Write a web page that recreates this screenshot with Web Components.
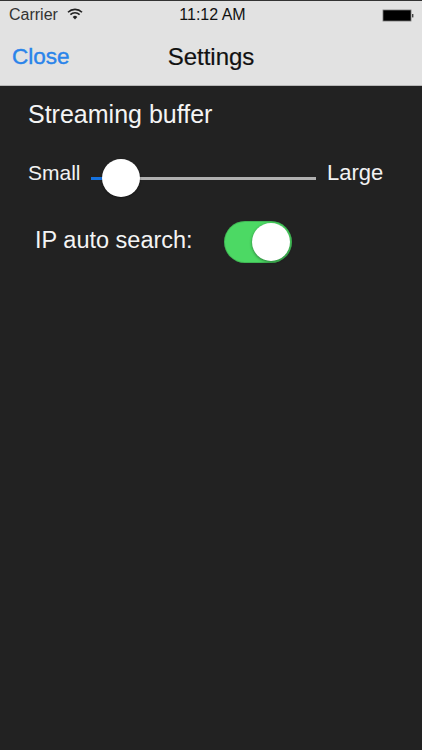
<!DOCTYPE html>
<html>
<head>
<meta charset="utf-8">
<style>
    html, body { margin: 0; height: 100%; background: #222222; }
    body { font-family: "Liberation Sans", Arial, sans-serif; overflow: hidden; }
</style>
</head>
<body>
<settings-screen></settings-screen>

<template id="status-bar-template">
<style>
    :host {
        display: flex;
        align-items: center;
        height: 28px;
        padding: 0 8px 0 9px;
        font-size: 16px;
        color: #333;
        position: relative;
    }
    .left { display: flex; align-items: center; gap: 9px; flex: 1; }
    .wifi { position: relative; top: -1px; }
    .time {
        position: absolute;
        left: 0; right: 0; top: 0;
        line-height: 28px;
        text-align: center;
        color: #111;
        font-size: 16px;
        padding-left: 3px;
    }
    .battery { display: block; margin-left: auto; }
</style>
<div class="left">
    <span>Carrier</span>
    <svg class="wifi" width="16" height="12" viewBox="0 0 16 12">
        <path d="M1 4.2a10 10 0 0 1 14 0" fill="none" stroke="#222" stroke-width="1.6"/>
        <path d="M3.4 6.6a6.6 6.6 0 0 1 9.2 0" fill="none" stroke="#222" stroke-width="1.6"/>
        <path d="M5.7 8.9a3.3 3.3 0 0 1 4.6 0L8 11.4z" fill="#222"/>
    </svg>
</div>
<span class="time">11:12 AM</span>
<svg class="battery" width="32" height="13" viewBox="0 0 32 13">
    <rect x="1" y="1" width="28" height="11" fill="#000" stroke="#777" stroke-width="0.8"/>
    <rect x="30" y="5" width="1.4" height="3.4" fill="#444"/>
</svg>
</template>

<template id="nav-bar-template">
<style>
    :host {
        display: flex;
        align-items: center;
        justify-content: center;
        height: 56px;
        box-sizing: border-box;
        padding-bottom: 1px;
        position: relative;
        font-size: 24px;
        color: #111;
        -webkit-text-stroke: 0.2px #111;
    }
    ::slotted([slot="back"]) {
        position: absolute;
        left: 12px;
        top: 14px;
        font-size: 22.5px;
        color: #2a84ea;
        -webkit-text-stroke: 0.4px #2a84ea;
        line-height: 27px;
    }
</style>
<slot name="back"></slot>
<slot></slot>
</template>

<template id="value-slider-template">
<style>
    :host {
        display: flex;
        align-items: center;
        height: 40px;
        color: #f2f2f2;
    }
    .min { width: 63px; position: relative; top: -5px; font-size: 21px; }
    .max { margin-left: 11px; position: relative; top: -5px; font-size: 22px; }
    .track {
        width: 225px;
        height: 3px;
        background: #b0b0b0;
        position: relative;
    }
    .fill {
        position: absolute;
        left: 0; top: 0;
        width: 14px;
        height: 3px;
        background: #1572e0;
    }
    .thumb {
        position: absolute;
        left: 11px;
        top: -18px;
        width: 38px;
        height: 38px;
        border-radius: 50%;
        background: #fff;
        box-shadow: 0 1px 2px rgba(0,0,0,.4);
    }
</style>
<span class="min"><slot name="min"></slot></span>
<div class="track"><div class="fill"></div><div class="thumb"></div></div>
<span class="max"><slot name="max"></slot></span>
</template>

<template id="toggle-switch-template">
<style>
    :host {
        display: block;
        width: 68px;
        height: 42px;
        border-radius: 21px;
        background: #4cd964;
        box-shadow: inset 0 0 0 1px rgba(0,0,0,.15);
        position: relative;
    }
    .knob {
        position: absolute;
        right: 2px;
        top: 2px;
        width: 38px;
        height: 38px;
        border-radius: 50%;
        background: #fff;
        box-shadow: 0 1px 3px rgba(0,0,0,.45);
    }
</style>
<div class="knob"></div>
</template>

<template id="settings-screen-template">
<style>
    :host {
        display: block;
        height: 750px;
        background: #222222;
    }
    header {
        background: #e2e2e2;
        border-top: 1px solid #333;
        border-bottom: 1px solid #b8b8b8;
    }
    main {
        padding: 14px 0 0 28px;
        color: #f4f4f4;
    }
    .title {
        font-size: 25px;
        line-height: 28px;
        margin-bottom: 30px;
    }
    .auto {
        display: flex;
        align-items: center;
        margin: 23px 0 0 7px;
        font-size: 23.5px;
    }
    .auto span { width: 189px; position: relative; top: -2px; }
</style>
<header>
    <status-bar></status-bar>
    <nav-bar><span slot="back">Close</span>Settings</nav-bar>
</header>
<main>
    <div class="title">Streaming buffer</div>
    <value-slider><span slot="min">Small</span><span slot="max">Large</span></value-slider>
    <div class="auto"><span>IP auto search:</span><toggle-switch></toggle-switch></div>
</main>
</template>

<script>
    //all elements just clone their template, nothing is interactive here
    function defineFromTemplate(name) {
        const template = document.getElementById(name + "-template");
        customElements.define(name, class extends HTMLElement {
            constructor () {
                super();
                this.attachShadow({mode: "open"}).append(template.content.cloneNode(true));
            }
        });
    }

    ["status-bar", "nav-bar", "value-slider", "toggle-switch", "settings-screen"].forEach(defineFromTemplate);
</script>
</body>
</html>
